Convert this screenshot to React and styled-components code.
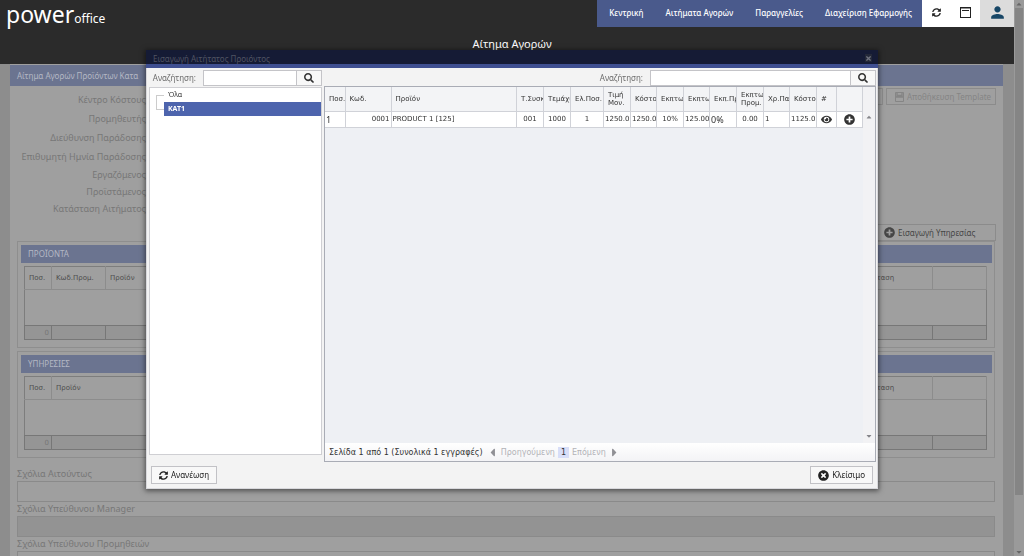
import React from 'react'
import styled, { createGlobalStyle } from 'styled-components'
import { FaSearch, FaSyncAlt, FaTimesCircle, FaPlusCircle, FaEye, FaCaretLeft, FaCaretRight, FaCaretUp, FaCaretDown, FaTimes } from 'react-icons/fa'
import { MdPerson } from 'react-icons/md'

const GlobalStyle = createGlobalStyle`
  * {
    box-sizing: border-box;
  }

  body {
    margin: 0;
    background: #8d8d8d;
    font-family: "Noto Sans", "Open Sans", sans-serif;
    font-size: 8px;
    line-height: 12px;
    color: #333333;
  }

  button, input, textarea {
    font: inherit;
    color: inherit;
    margin: 0;
    padding: 0;
    border-radius: 0;
  }

  h1, h2, p, ul {
    margin: 0;
    padding: 0;
    font-weight: normal;
  }
`;

const Shell = styled.div`
  display: flex;
  height: 100vh;
  overflow: hidden;
`;

const Page = styled.div`
  flex: 1;
  min-width: 0;
`;

const ScrollBar = styled.div`
  display: flex;
  flex-direction: column;
  align-items: center;
  width: 10px;
  background: #9a9a9a;
  color: #666666;
`;

const ScrollThumb = styled.div`
  flex: 1;
  width: 8px;
  margin-bottom: 53px;
  background: #858585;
`;

const Header = styled.header`
  height: 64px;
  background: #2b2b2b;
  color: #ffffff;
`;

const HeaderTop = styled.div`
  display: flex;
  justify-content: space-between;
  height: 36px;
`;

const Logo = styled.a`
  padding-left: 6px;
  color: #ffffff;
  text-decoration: none;
  font-size: 23px;
  line-height: 28px;

  small {
    font-size: 12px;
  }
`;

const Nav = styled.nav`
  display: flex;
  align-items: center;
  gap: 22px;
  height: 27px;
  padding: 0 10px 2px 12px;
  background: #4a5a8c;

  a {
    color: #ffffff;
    font-weight: 500;
    text-decoration: none;
  }
`;

const NavGroup = styled.div`
  display: flex;
`;

const IconButton = styled.button`
  display: flex;
  align-items: center;
  justify-content: center;
  width: ${props => props.$wide ? '34px' : '29px'};
  height: 27px;
  padding-bottom: 2px;
  border: 0;
  background: ${props => props.$wide ? '#dcdcdc' : '#ffffff'};
  color: ${props => props.$wide ? '#174666' : '#222222'};
`;

const PageTitle = styled.h1`
  padding-left: 10px;
  font-size: 11px;
  line-height: 16px;
  text-align: center;
`;

const Content = styled.main`
  margin: 0 11px 0 10px;
  padding-top: 1px;
  min-height: 492px;
  background: #9f9f9f;
`;

const Bar = styled.h2`
  height: ${props => props.$main ? '21px' : '18px'};
  padding-left: 7px;
  background: #6b7490;
  color: #b4b8c4;
  font-size: 8px;
  line-height: ${props => props.$main ? '21px' : '18px'};
`;

const Toolbar = styled.div`
  display: flex;
  justify-content: flex-end;
  gap: 3px;
  padding: 2px 7px 0 0;
`;

const DimButton = styled.button`
  display: flex;
  align-items: center;
  gap: 3px;
  width: ${props => props.$wide ? '121px' : '110px'};
  height: 17px;
  padding-left: 8px;
  border: 1px solid #8b8b8b;
  background: #9f9f9f;
  color: ${props => props.disabled ? '#858585' : '#464646'};
  white-space: nowrap;

  svg {
    flex: none;
  }
`;

const Details = styled.dl`
  width: 136px;
  height: 132px;
  margin: -15px 0 0;
  color: #777777;
  font-size: 9px;
  text-align: right;
  white-space: nowrap;

  dt {
    line-height: 17px;
  }
`;

const DetailsTall = styled.div`
  display: contents;

  dt {
    line-height: 19px;
  }
`;

const Section = styled.section`
  margin: 0 8px 3px 7px;
  padding: 3px 2px 7px 3px;
  border: 1px solid #8e8e8e;
`;

const DimTable = styled.table`
  width: calc(100% - 8px);
  margin: 3px 0 0 3px;
  table-layout: fixed;
  border-collapse: collapse;
  border: 1px solid #7d7d7d;
  color: #4e4e4e;
  font-family: "DejaVu Sans", sans-serif;
  font-size: 7px;
  line-height: 10px;

  th, td {
    padding: 0 4px;
    border-right: 1px solid #8c8c8c;
    text-align: left;
    font-weight: normal;
    white-space: nowrap;
  }

  th {
    height: 23px;
    border-bottom: 1px solid #8c8c8c;
  }

  tbody td {
    height: 36px;
    border: 0;
  }

  tfoot td {
    height: 14px;
    padding: 0 2px;
    border: 1px solid #777777;
    background: #959595;
    color: #777777;
    text-align: right;
  }
`;

const Comments = styled.div`
  display: flex;
  flex-direction: column;
  padding: 6px 8px 0 7px;

  label {
    height: 14px;
    color: #777777;
    font-size: 9px;
    line-height: 14px;
  }

  textarea {
    height: 21px;
    border: 1px solid #8a8a8a;
    background: #9f9f9f;
    resize: none;
  }

  textarea:disabled {
    background: #939393;
  }
`;

const Overlay = styled.div`
  position: fixed;
  inset: 0;
  display: flex;
  padding: 50px 146px 67px;
`;

const Dialog = styled.div`
  display: flex;
  flex-direction: column;
  flex: 1;
  min-width: 0;
  background: #f3f3f3;
  border: 1px solid #d8d8dc;
  border-top: 0;
  box-shadow: 0 1px 5px 1px rgba(0, 0, 0, 0.5);
`;

const DialogTitle = styled.div`
  display: flex;
  justify-content: space-between;
  height: 18px;
  margin: 0 -1px;
  padding: 4px 6px 0 7px;
  background: #151b35;
  border-bottom: 4px solid #3f4f91;
  color: #505362;
  line-height: 10px;

  button {
    display: flex;
    align-items: center;
    height: 8px;
    border: 0;
    background: #232838;
    color: #70737f;
  }
`;

const DialogBody = styled.div`
  display: grid;
  grid-template-columns: 173px minmax(0, 1fr);
  gap: 2px;
  flex: 1;
  padding: 1px 1px 0 2px;
`;

const Pane = styled.div`
  display: flex;
  flex-direction: column;
  min-width: 0;
  padding-bottom: ${props => props.$bottom};
`;

const SearchRow = styled.form`
  display: flex;
  align-items: center;
  justify-content: flex-end;
  gap: 7px;
  height: 17px;
  flex: none;

  label {
    color: #6c6c6c;
    padding-top: 1px;
  }
`;

const SearchBox = styled.div`
  display: flex;
  width: ${props => props.$width};
  height: 16px;
  border: 1px solid #c4c4c8;

  input {
    flex: 1;
    min-width: 0;
    border: 0;
    background: #ffffff;
  }

  button {
    display: flex;
    align-items: center;
    justify-content: center;
    width: 25px;
    border: 0;
    border-left: 1px solid #c4c4c8;
    background: #f8f8f8;
  }
`;

const Tree = styled.div`
  display: flex;
  flex: 1;
  margin-top: 1px;
  padding-left: 6px;
  border: 1px solid #cfcfd3;
  background: #ffffff;
`;

const TreeLine = styled.div`
  width: 8px;
  height: 15px;
  margin-top: 7px;
  border: 1px solid #cccccc;
  border-right: 0;
`;

const TreeList = styled.ul`
  flex: 1;
  list-style: none;
  font-size: 7px;

  li {
    padding-left: 4px;
    line-height: 14px;
  }

  li:last-child {
    background: #4d64ad;
    color: #ffffff;
    font-weight: bold;
  }
`;

const Grid = styled.div`
  display: flex;
  flex-direction: column;
  flex: 1;
  border: 1px solid #a9acb5;
  background: #eef0f4;
  font-family: "DejaVu Sans", sans-serif;
  font-size: 7px;
  line-height: 9px;
`;

const GridBody = styled.div`
  display: flex;
  flex: 1;
`;

const Table = styled.table`
  flex: 1;
  align-self: flex-start;
  min-width: 0;
  width: 0;
  table-layout: fixed;
  border-collapse: collapse;

  th, td {
    overflow: hidden;
    border-right: 1px solid #d0d2d8;
    border-bottom: 1px solid #d0d2d8;
    font-weight: normal;
    white-space: nowrap;
  }

  th {
    height: 24px;
    padding: 0 0 0 4px;
    background: #f3f4f6;
    text-align: left;
    line-height: 8px;
  }

  td {
    height: 16px;
    padding: 0 1px;
    background: #ffffff;
  }
`;

const Cell = styled.td`
  text-align: ${props => props.$align || 'left'};
  font-family: ${props => props.$big ? '"Noto Sans", sans-serif' : 'inherit'};
  font-size: ${props => props.$big ? '9px' : '7px'};

  button {
    display: flex;
    margin: 0 auto;
    border: 0;
    background: none;
  }
`;

const GridScroll = styled.div`
  display: flex;
  flex-direction: column;
  justify-content: space-between;
  align-items: center;
  width: 12px;
  padding: 26px 0 3px;
  background: #f2f2f4;
  color: #85858a;
`;

const Pager = styled.div`
  display: flex;
  align-items: center;
  gap: 3px;
  height: 18px;
  padding-left: 4px;
  background: linear-gradient(#ffffff, #f3f3f6);
  font-size: 8px;

  span {
    display: flex;
    align-items: center;
    gap: 2px;
    color: #b3b3b8;
  }

  span svg {
    color: #909095;
  }

  b {
    padding: 1px 3px;
    background: #d8def8;
    font-weight: normal;
  }
`;

const DialogFooter = styled.div`
  display: flex;
  justify-content: space-between;
  padding: 4px;
`;

const Button = styled.button`
  display: flex;
  align-items: center;
  justify-content: center;
  gap: 3px;
  height: 18px;
  padding: 0 7px;
  border: 1px solid #c2c2c6;
  background: #f8f8f8;
  color: #222222;
`;

const columns = [
  { label: 'Ποσ.', width: 20 },
  { label: 'Κωδ.', width: 46 },
  { label: 'Προϊόν' },
  { label: 'Τ.Συσκ.', width: 27 },
  { label: 'Τεμάχια', width: 27 },
  { label: 'Ελ.Ποσ.', width: 33 },
  { label: 'Τιμή Μον.', width: 27, wrap: true },
  { label: 'Κόστος', width: 26 },
  { label: 'Εκπτωση', width: 27 },
  { label: 'Εκπτωση', width: 26 },
  { label: 'Εκπ.Προμ.', width: 27 },
  { label: 'Εκπτωση Προμ.', width: 27, wrap: true },
  { label: 'Χρ.Παρ.', width: 26 },
  { label: 'Κόστος', width: 27 },
  { label: '#', width: 20 },
  { label: '', width: 26 },
]

const DimGrid = ({ heads }) => (
  <DimTable>
    <colgroup>
      {heads.map((head, index) => <col key={index} width={head.width} />)}
    </colgroup>
    <thead>
      <tr>{heads.map((head, index) => <th key={index}>{head.label}</th>)}</tr>
    </thead>
    <tbody>
      <tr><td colSpan={heads.length}></td></tr>
    </tbody>
    <tfoot>
      <tr>{heads.map((head, index) => <td key={index}>{index === 0 ? '0' : ''}</td>)}</tr>
    </tfoot>
  </DimTable>
)

const Search = ({ id, width }) => (
  <SearchRow>
    <label htmlFor={id}>Αναζήτηση:</label>
    <SearchBox $width={width}>
      <input id={id} type='text' />
      <button type='button' aria-label='Αναζήτηση'><FaSearch size={10} /></button>
    </SearchBox>
  </SearchRow>
)

const WindowIcon = () => (
  <svg width='11' height='11' viewBox='0 0 11 11' fill='none' stroke='currentColor'>
    <rect x='0.5' y='0.5' width='10' height='10' />
    <path d='M0 1h11' />
    <path d='M2 3.5h7' />
  </svg>
)

const SaveIcon = () => (
  <svg width='9' height='10' viewBox='0 0 9 10' fill='none' stroke='currentColor'>
    <path d='M0.5 0.5h8v9h-8z' />
    <path d='M2 0v3.5h5V0M0 5h9' strokeWidth='1.4' />
  </svg>
)

const ProductDialog = () => (
  <Overlay>
    <Dialog role='dialog' aria-labelledby='dialog-title'>
      <DialogTitle>
        <span id='dialog-title'>Εισαγωγή Αιτήτατος Προιόντος</span>
        <button type='button' aria-label='Κλείσιμο'><FaTimes size={7} /></button>
      </DialogTitle>

      <DialogBody>
        <Pane $bottom='7px'>
          <Search id='search-category' width='119px' />
          <Tree>
            <TreeLine />
            <TreeList>
              <li>Όλα</li>
              <li>ΚΑΤ1</li>
            </TreeList>
          </Tree>
        </Pane>

        <Pane $bottom='0'>
          <Search id='search-product' width='226px' />
          <Grid>
            <GridBody>
              <Table>
                <colgroup>
                  {columns.map((column, index) => <col key={index} width={column.width} />)}
                </colgroup>
                <thead>
                  <tr>
                    {columns.map((column, index) => (
                      <th key={index}>
                        {column.wrap ? column.label.split(' ').map(word => <div key={word}>{word}</div>) : column.label}
                      </th>
                    ))}
                  </tr>
                </thead>
                <tbody>
                  <tr>
                    <Cell $big>1</Cell>
                    <Cell $align='right'>0001</Cell>
                    <Cell>PRODUCT 1 [125]</Cell>
                    <Cell $align='center'>001</Cell>
                    <Cell $align='center'>1000</Cell>
                    <Cell $align='center'>1</Cell>
                    <Cell>1250.00</Cell>
                    <Cell>1250.00</Cell>
                    <Cell $align='center'>10%</Cell>
                    <Cell $align='center'>125.00</Cell>
                    <Cell $big>0%</Cell>
                    <Cell $align='center'>0.00</Cell>
                    <Cell>1</Cell>
                    <Cell>1125.00</Cell>
                    <Cell><button type='button' aria-label='Προβολή'><FaEye size={11} /></button></Cell>
                    <Cell><button type='button' aria-label='Προσθήκη'><FaPlusCircle size={11} /></button></Cell>
                  </tr>
                </tbody>
              </Table>
              <GridScroll>
                <FaCaretUp size={8} />
                <FaCaretDown size={8} />
              </GridScroll>
            </GridBody>
            <Pager>
              <p>Σελίδα 1 από 1 (Συνολικά 1 εγγραφές)</p>
              <span><FaCaretLeft size={13} />Προηγούμενη</span>
              <b>1</b>
              <span>Επόμενη<FaCaretRight size={13} /></span>
            </Pager>
          </Grid>
        </Pane>
      </DialogBody>

      <DialogFooter>
        <Button type='button'><FaSyncAlt size={9} />Ανανέωση</Button>
        <Button type='button'><FaTimesCircle size={11} />Κλείσιμο</Button>
      </DialogFooter>
    </Dialog>
  </Overlay>
)

const App = () => {


  return (
    <Shell>
      <GlobalStyle />
      <Page>
        <Header>
          <HeaderTop>
            <Logo href='#'>power<small>office</small></Logo>
            <NavGroup>
              <Nav>
                <a href='#'>Κεντρική</a>
                <a href='#'>Αιτήματα Αγορών</a>
                <a href='#'>Παραγγελίες</a>
                <a href='#'>Διαχείριση Εφαρμογής</a>
              </Nav>
              <IconButton type='button' aria-label='Ανανέωση'><FaSyncAlt size={9} /></IconButton>
              <IconButton type='button' aria-label='Παράθυρο'><WindowIcon /></IconButton>
              <IconButton type='button' aria-label='Χρήστης' $wide><MdPerson size={19} /></IconButton>
            </NavGroup>
          </HeaderTop>
          <PageTitle>Αίτημα Αγορών</PageTitle>
        </Header>

        <Content>
          <Bar $main>Αίτημα Αγορών Προϊόντων Κατα</Bar>
          <Toolbar>
            <DimButton type='button' disabled></DimButton>
            <DimButton type='button' disabled><SaveIcon />Αποθήκευση Template</DimButton>
          </Toolbar>

          <Details>
            <DetailsTall>
              <dt>Κέντρο Κόστους</dt>
              <dt>Προμηθευτής</dt>
              <dt>Διεύθυνση Παράδοσης</dt>
              <dt>Επιθυμητή Ημνία Παράδοσης</dt>
            </DetailsTall>
            <dt>Εργαζόμενος</dt>
            <dt>Προϊστάμενος</dt>
            <dt>Κατάσταση Αιτήματος</dt>
          </Details>

          <Toolbar>
            <DimButton type='button' $wide><FaPlusCircle size={11} />Εισαγωγή Υπηρεσίας</DimButton>
          </Toolbar>

          <Section>
            <Bar>ΠΡΟΪΟΝΤΑ</Bar>
            <DimGrid heads={[
              { label: 'Ποσ.', width: 27 },
              { label: 'Κωδ.Προμ.', width: 54 },
              { label: 'Προϊόν' },
              { label: 'Κατάσταση', width: 83 },
              { label: '', width: 54 },
            ]} />
          </Section>

          <Section>
            <Bar>ΥΠΗΡΕΣΙΕΣ</Bar>
            <DimGrid heads={[
              { label: 'Ποσ.', width: 27 },
              { label: 'Προϊόν' },
              { label: 'Κατάσταση', width: 83 },
              { label: '', width: 54 },
            ]} />
          </Section>

          <Comments>
            <label htmlFor='comments-user'>Σχόλια Αιτούντως</label>
            <textarea id='comments-user' />
            <label htmlFor='comments-manager'>Σχόλια Υπεύθυνου Manager</label>
            <textarea id='comments-manager' disabled />
            <label htmlFor='comments-supply'>Σχόλια Υπεύθυνου Προμηθειών</label>
            <textarea id='comments-supply' />
          </Comments>
        </Content>
      </Page>

      <ScrollBar>
        <FaCaretUp size={8} />
        <ScrollThumb />
        <FaCaretDown size={8} />
      </ScrollBar>

      <ProductDialog />
    </Shell>
  )
}

export default App
